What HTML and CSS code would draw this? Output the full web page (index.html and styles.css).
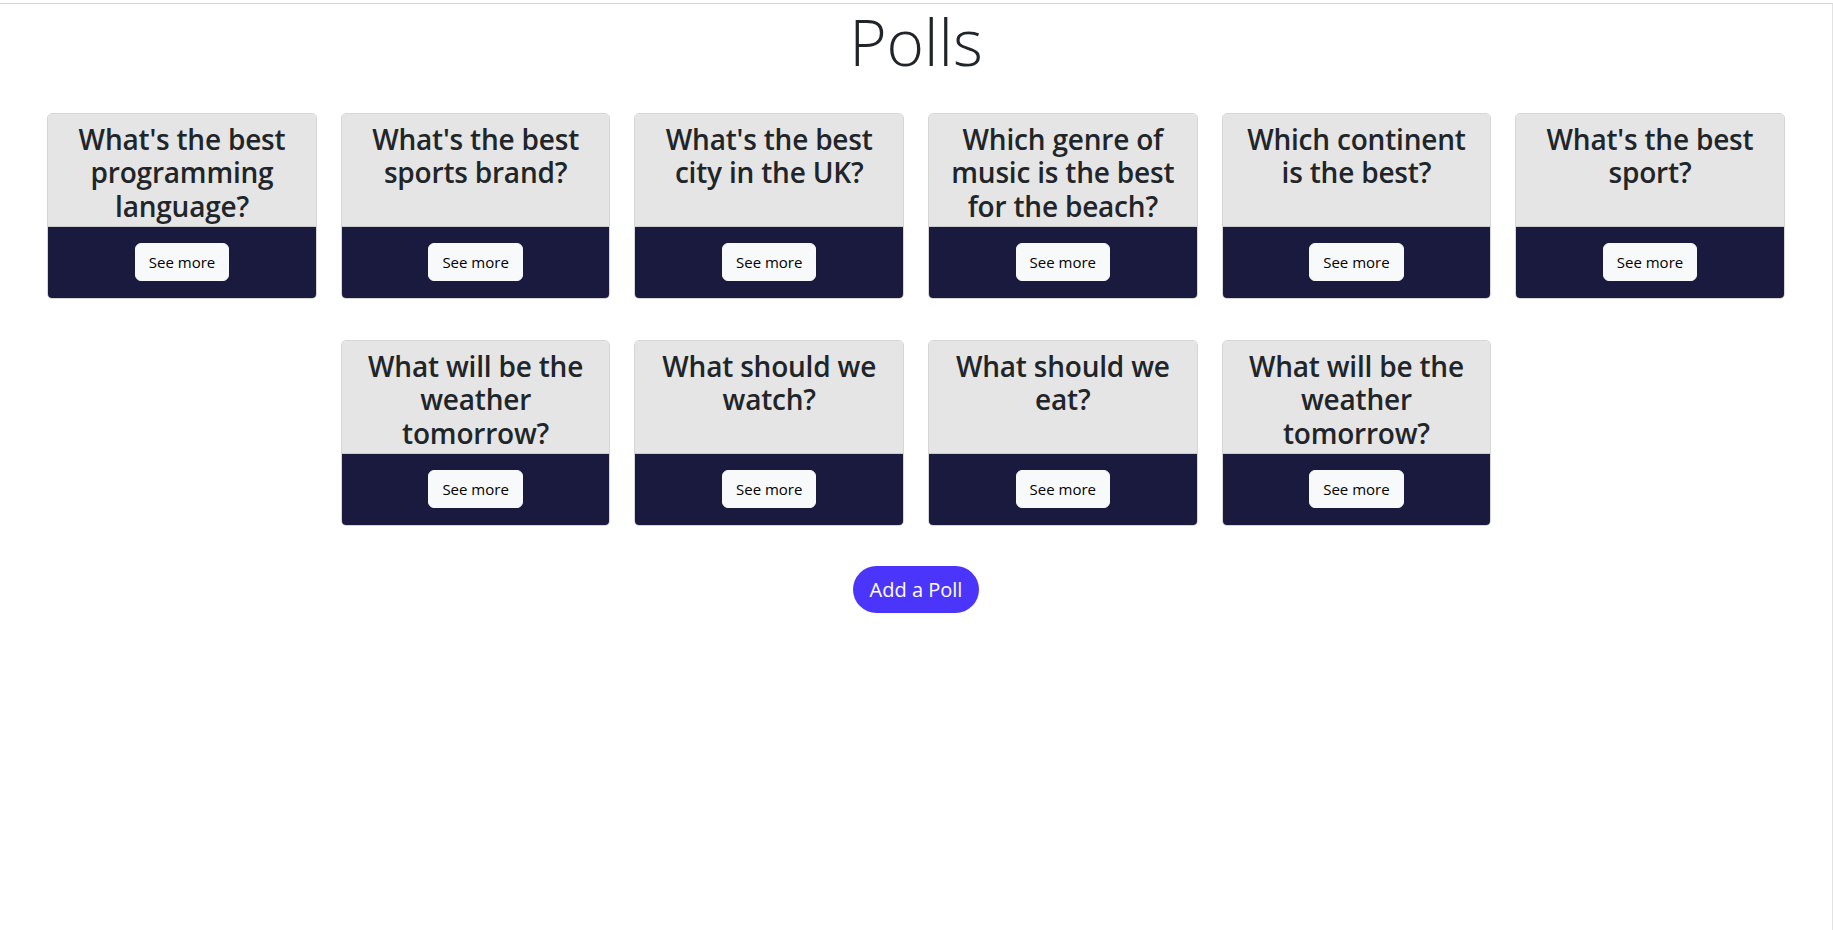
FILE: index.html
```html
<!DOCTYPE html>
<html lang="en">
<head>
<meta charset="utf-8">
<title>Polls</title>
<link rel="stylesheet" href="styles.css">
</head>
<body>
<div class="frame">
  <h1 class="page-title">Polls</h1>
  <div class="poll-grid">
    <div class="poll-card"><div class="poll-head"><h3>What's the best programming language?</h3></div><div class="poll-foot"><button class="see-more">See more</button></div></div>
    <div class="poll-card"><div class="poll-head"><h3>What's the best sports brand?</h3></div><div class="poll-foot"><button class="see-more">See more</button></div></div>
    <div class="poll-card"><div class="poll-head"><h3>What's the best city in the UK?</h3></div><div class="poll-foot"><button class="see-more">See more</button></div></div>
    <div class="poll-card"><div class="poll-head"><h3>Which genre of music is the best for the beach?</h3></div><div class="poll-foot"><button class="see-more">See more</button></div></div>
    <div class="poll-card"><div class="poll-head"><h3>Which continent is the best?</h3></div><div class="poll-foot"><button class="see-more">See more</button></div></div>
    <div class="poll-card"><div class="poll-head"><h3>What's the best sport?</h3></div><div class="poll-foot"><button class="see-more">See more</button></div></div>
    <div class="poll-card"><div class="poll-head"><h3>What will be the weather tomorrow?</h3></div><div class="poll-foot"><button class="see-more">See more</button></div></div>
    <div class="poll-card"><div class="poll-head"><h3>What should we watch?</h3></div><div class="poll-foot"><button class="see-more">See more</button></div></div>
    <div class="poll-card"><div class="poll-head"><h3>What should we eat?</h3></div><div class="poll-foot"><button class="see-more">See more</button></div></div>
    <div class="poll-card"><div class="poll-head"><h3>What will be the weather tomorrow?</h3></div><div class="poll-foot"><button class="see-more">See more</button></div></div>
  </div>
  <div class="actions"><button class="add-poll">Add a Poll</button></div>
</div>
</body>
</html>
```
FILE: styles.css
```css
* { box-sizing: border-box; }
html, body { margin: 0; padding: 0; background: #fff; }
body {
  font-family: "Open Sans", "Noto Sans", sans-serif;
  color: #212529;
}
.frame {
  margin-top: 3px;
  height: 927px;
  width: 1833px;
  border-top: 1px solid #d4d4d4;
  border-right: 1px solid #e2e2e2;
}
.page-title {
  margin: 0;
  text-align: center;
  font-size: 64px;
  font-weight: 300;
  line-height: 1.2;
  padding-top: 0;
}
.poll-grid {
  margin-top: 32px;
  display: flex;
  flex-wrap: wrap;
  justify-content: center;
  column-gap: 24px;
  row-gap: 41px;
}
.poll-card {
  width: 269.6px;
  border: 1px solid #d6d6d6;
  border-radius: 5px;
  overflow: hidden;
  display: flex;
  flex-direction: column;
}
.poll-head {
  background: #e5e5e5;
  height: 113px;
  padding: 9px 12px 0;
  border-bottom: 1px solid #cbcbcb;
}
.poll-head h3 {
  margin: 0;
  text-align: center;
  font-size: 28px;
  font-weight: 600;
  line-height: 1.2;
  letter-spacing: -0.2px;
}
.poll-foot {
  background: #1a1a3e;
  padding: 16px 0 17px;
  display: flex;
  justify-content: center;
}
.see-more {
  font-family: inherit;
  font-size: 15px;
  line-height: 24px;
  padding: 6px 13px;
  border: 1px solid #f8f9fa;
  border-radius: 6px;
  background: #f8f9fa;
  color: #000;
}
.actions {
  margin-top: 40px;
  display: flex;
  justify-content: center;
}
.add-poll {
  font-family: inherit;
  font-size: 20px;
  line-height: 31px;
  padding: 8px 17px;
  border: 0;
  border-radius: 24px;
  background: #4b35fb;
  color: #fff;
}
```
